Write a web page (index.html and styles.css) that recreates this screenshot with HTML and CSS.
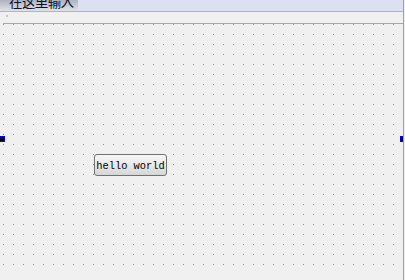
FILE: index.html
```html
<!DOCTYPE html>
<html lang="zh">
<head>
    <meta charset="UTF-8">
    <title>form</title>
    <link rel="stylesheet" href="styles.css">
</head>
<body>
    <div id="window">
        <div id="menubar">
            <div class="tab"><span>在这里输入</span></div>
        </div>
        <div id="ruler"><i class="mark"></i></div>
        <div id="form">
            <div id="grid">
                <button class="btn">hello world</button>
            </div>
        </div>
        <i class="handle left"></i>
        <i class="handle right"></i>
    </div>
</body>
</html>
```

FILE: styles.css
```css
body{
    margin: 0;
    background-color: #f0f0f0;
}
#window{
    position: relative;
    width: 403px;
    height: 280px;
    border-right: 1px solid #a0a0a0;
    background-color: #f0f0f0;
    overflow: hidden;
}
#menubar{
    display: flex;
    height: 11px;
    border-bottom: 1px solid #b2b4bc;
    background-color: #dce0f2;
}
.tab{
    width: 78px;
    overflow: hidden;
    background: linear-gradient(#aeb2c0, #e0e2ea);
}
.tab span{
    display: block;
    margin-top: -6px;
    padding-left: 9px;
    font-family: "Noto Sans CJK SC", sans-serif;
    font-size: 13.5px;
    line-height: 14px;
    letter-spacing: -0.6px;
    color: #10131f;
    white-space: nowrap;
}
#ruler{
    height: 11px;
    position: relative;
}
.mark{
    position: absolute;
    left: 6px;
    top: 3px;
    width: 2px;
    height: 2px;
    background-color: #c4c4c4;
}
#form{
    margin-left: 3px;
    border-top: 1px solid #a8a8a8;
}
#grid{
    position: relative;
    width: 398px;
    height: 246px;
    background-color: #8c8c8c;
    background-image:
        linear-gradient(to right, transparent 1px, #f0f0f0 1px),
        linear-gradient(to bottom, transparent 1px, #f0f0f0 1px);
    background-size: 10px 10px;
}
.btn{
    position: absolute;
    left: 91px;
    top: 130px;
    width: 73px;
    height: 22px;
    padding: 2px 0 0;
    border: 1px solid #707070;
    border-radius: 3px;
    background: linear-gradient(#f6f6f6 0%, #e8e8e8 50%, #d6d6d6 100%);
    font-family: "Liberation Mono", monospace;
    font-size: 10.4px;
    color: #000;
}
.handle{
    position: absolute;
    top: 136px;
    width: 4px;
    height: 4px;
    border: 1px solid #0000ff;
    background-color: #000;
}
.handle.left{
    left: -1px;
}
.handle.right{
    left: 400px;
}
```
